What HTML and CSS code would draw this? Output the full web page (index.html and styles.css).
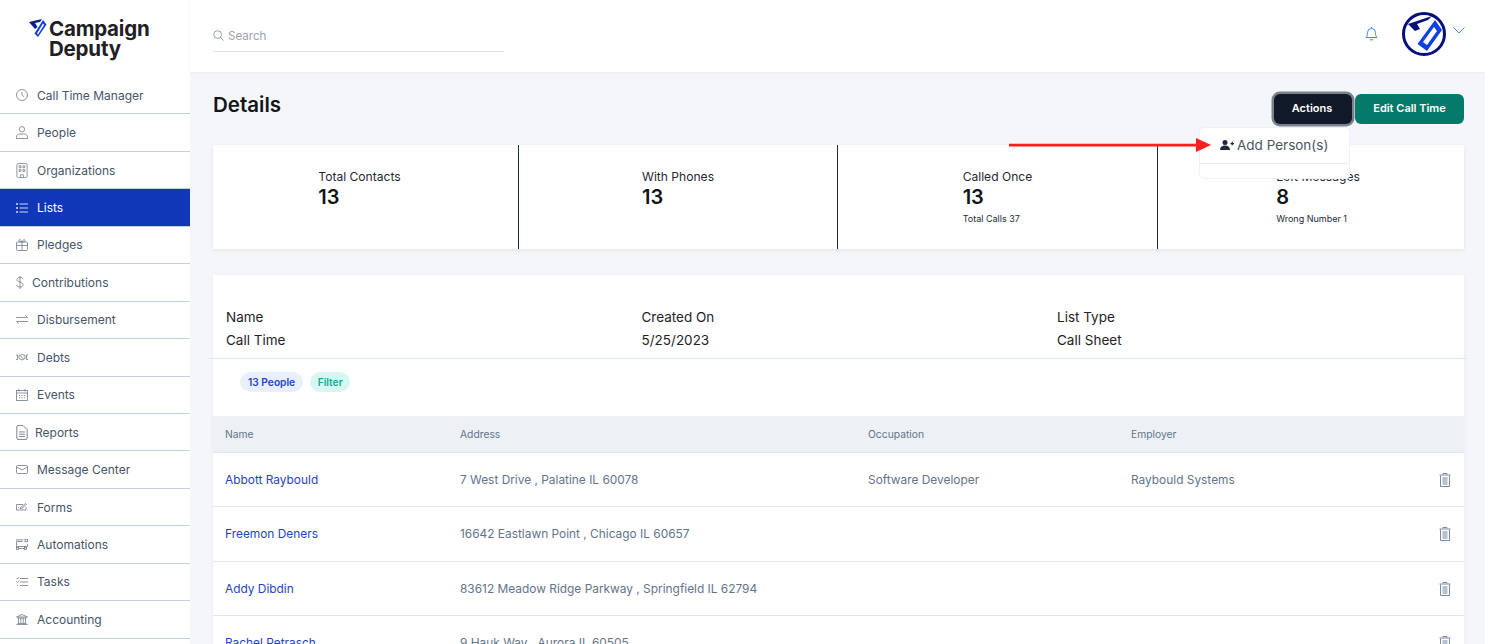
FILE: index.html
```html
<!DOCTYPE html>
<html lang="en">
<head>
  <meta charset="UTF-8">
  <meta name="viewport" content="width=device-width, initial-scale=1.0">
  <title>Details</title>
  <link rel="stylesheet" href="styles.css">
</head>
<body>
  <div class="app">
    <aside class="sidebar">
      <div class="logo">
        <svg class="logo-mark" viewBox="0 0 20 20" width="20" height="20">
          <path d="M0 3 L13 0 L11 3 L6 4 L8.500 8 L6 10 Z" fill="#0b1f8f"/>
          <path d="M14 1 L17.500 5.500 L9 18 L5.500 14.500 Z M14 4.500 L8 14.500 L9 15.500 L15 6 Z" fill="#1240e0" fill-rule="evenodd"/>
        </svg>
        <div class="logo-text">Campaign<br>Deputy</div>
      </div>
      <nav class="nav">
        <a class="nav-item">
          <svg class="nav-icon" viewBox="0 0 12 12"><circle cx="6" cy="6" r="5.500"/><path d="M6 2.800V6l2 1.800"/></svg>
          <span>Call Time Manager</span>
        </a>
        <a class="nav-item">
          <svg class="nav-icon" viewBox="0 0 12 13"><circle cx="6" cy="3.300" r="2.700"/><path d="M.5 12.500v-1.700c0-1.600 1.300-2.800 3-2.800h5c1.700 0 3 1.200 3 2.800v1.700z"/></svg>
          <span>People</span>
        </a>
        <a class="nav-item">
          <svg class="nav-icon" viewBox="0 0 12 16"><rect x=".5" y=".5" width="11" height="15" rx="1.500"/><path d="M3 3h2v2H3zM7 3h2v2H7zM3 7h2v2H3zM7 7h2v2H7zM4.500 15.500v-3h3v3"/></svg>
          <span>Organizations</span>
        </a>
        <a class="nav-item nav-active">
          <svg class="nav-icon" viewBox="0 0 12 10"><path d="M3.500 1H12M3.500 5H12M3.500 9H12"/><path d="M.5.5h1v1h-1zM.5 4.500h1v1h-1zM.5 8.500h1v1h-1z"/></svg>
          <span>Lists</span>
        </a>
        <a class="nav-item">
          <svg class="nav-icon" viewBox="0 0 12 12"><rect x=".5" y="3" width="11" height="8.500" rx="1"/><path d="M.5 6.500h11M6 3v8.500M6 3C4.500 3 2.800 2.600 2.800 1.500S5 .2 6 3c1-2.800 3.200-2.600 3.200-1.500S7.500 3 6 3z"/></svg>
          <span>Pledges</span>
        </a>
        <a class="nav-item">
          <svg class="nav-icon nav-icon-dollar" viewBox="0 0 8 13"><path d="M7 3.200C7 2 5.700 1.500 4 1.500S1 2.300 1 3.600s1.300 2 3 2.500 3 1 3 2.600-1.300 2.400-3 2.400-3-.6-3-1.900M4 0v13"/></svg>
          <span>Contributions</span>
        </a>
        <a class="nav-item">
          <svg class="nav-icon" viewBox="0 0 12 9"><path d="M0 2.500h11.500M9.300 .3l2.200 2.200M12 6.500H.5M2.700 8.700.5 6.500"/></svg>
          <span>Disbursement</span>
        </a>
        <a class="nav-item">
          <svg class="nav-icon" viewBox="0 0 12 7"><path d="M0 1h1.500v4.500H0M12 1h-1.500v4.500H12M3 1.500 6 .5l3 1v3l-3 1.500-3-1.500z"/><path d="M4.500 2l3 3"/></svg>
          <span>Debts</span>
        </a>
        <a class="nav-item">
          <svg class="nav-icon" viewBox="0 0 12 12"><rect x=".5" y="1.500" width="11" height="10"/><path d="M.5 4h11M3 0v2.500M9 0v2.500M3 6.500h1.200M5.400 6.500h1.200M7.800 6.500H9M3 8.800h1.200M5.400 8.800h1.200M7.800 8.800H9"/></svg>
          <span>Events</span>
        </a>
        <a class="nav-item nav-reports">
          <svg class="nav-icon" viewBox="0 0 10 13"><path d="M.5 1.500a1 1 0 0 1 1-1h4.500l3.500 3.500v7.500a1 1 0 0 1-1 1h-7a1 1 0 0 1-1-1zM2.500 6h5M2.500 8h5M2.500 10h5"/></svg>
          <span>Reports</span>
        </a>
        <a class="nav-item">
          <svg class="nav-icon" viewBox="0 0 12 9"><rect x=".5" y=".5" width="11" height="8" rx="1"/><path d="M.5 2l5.500 3 5.500-3"/></svg>
          <span>Message Center</span>
        </a>
        <a class="nav-item">
          <svg class="nav-icon" viewBox="0 0 12 8"><path d="M7 1.500H.5v5.500h9.500V4M2 4.500h1M4 5l5.500-4.500 1 1L5 6z"/></svg>
          <span>Forms</span>
        </a>
        <a class="nav-item">
          <svg class="nav-icon" viewBox="0 0 12 11"><path d="M0 .9h7.500M6.500 2.500H.5v5h11V5M2.500 9.500h6"/><rect x="9" y=".2" width="2.500" height="2.500"/><rect x=".5" y="8.500" width="2" height="2"/><rect x="8.500" y="8.500" width="2" height="2"/></svg>
          <span>Automations</span>
        </a>
        <a class="nav-item">
          <svg class="nav-icon" viewBox="0 0 12 10"><path d="M4 1.500h8M4 5h8M4 8.500h8M.5 1l1 1 1.500-1.800M.5 4.500l1 1 1.500-1.800M1 8.500h1"/></svg>
          <span>Tasks</span>
        </a>
        <a class="nav-item">
          <svg class="nav-icon" viewBox="0 0 12 11"><path d="M.5 3 6 .5 11.500 3zM1.500 4h9M2.500 4v5M4.800 4v5M7.200 4v5M9.500 4v5M1.500 9.500h9M.5 10.500h11"/></svg>
          <span>Accounting</span>
        </a>
      </nav>
    </aside>

    <div class="content">
      <header class="topbar">
        <div class="search">
          <svg class="search-icon" viewBox="0 0 12 12"><circle cx="5" cy="5" r="4.200"/><path d="M8 8l3.500 3.500"/></svg>
          <span>Search</span>
        </div>
        <div class="topbar-right">
          <svg class="bell" viewBox="0 0 13 15"><path d="M1 11.500c1-1 1.500-2.500 1.500-5a4 4 0 0 1 8 0c0 2.500.5 4 1.500 5zM4.800 13.800h3.400M6.500 1v1.500"/></svg>
          <div class="avatar">
            <svg viewBox="0 0 44 44" width="44" height="44">
              <circle cx="22" cy="22" r="20.500" fill="#fff" stroke="#06107c" stroke-width="3"/>
              <path d="M6 12 L30 4 L26 8 L15 12 L18 17 L13 19 Z" fill="#06107c"/>
              <path d="M33 8 L40 18 L25 39 L15.500 32 Z M32 15 L21 30 L25 33 L35 19 Z" fill="#1240e0" fill-rule="evenodd"/>
            </svg>
          </div>
          <svg class="chevron" viewBox="0 0 12 7"><path d="M.5.5 6 6 11.500.5"/></svg>
        </div>
      </header>

      <main class="main">
        <div class="page-head">
          <h1>Details</h1>
          <div class="buttons">
            <button class="btn btn-dark">Actions</button>
            <button class="btn btn-green">Edit Call Time</button>
          </div>
        </div>

        <section class="stats">
          <div class="stat stat-first">
            <div>
              <div class="stat-label">Total Contacts</div>
              <div class="stat-value">13</div>
            </div>
          </div>
          <div class="stat">
            <div>
              <div class="stat-label">With Phones</div>
              <div class="stat-value">13</div>
            </div>
          </div>
          <div class="stat stat-third">
            <div>
              <div class="stat-label">Called Once</div>
              <div class="stat-value">13</div>
              <div class="stat-note">Total Calls 37</div>
            </div>
          </div>
          <div class="stat stat-last">
            <div>
              <div class="stat-label">Left Messages</div>
              <div class="stat-value">8</div>
              <div class="stat-note">Wrong Number 1</div>
            </div>
          </div>
        </section>

        <section class="card">
          <div class="info">
            <div>Name</div><div>Created On</div><div>List Type</div>
            <div>Call Time</div><div>5/25/2023</div><div>Call Sheet</div>
          </div>
          <div class="chips">
            <span class="chip chip-blue">13 People</span>
            <span class="chip chip-teal">Filter</span>
          </div>
          <table class="people">
            <thead>
              <tr><th class="col-name">Name</th><th class="col-address">Address</th><th class="col-job">Occupation</th><th>Employer</th><th class="col-del"></th></tr>
            </thead>
            <tbody>
              <tr>
                <td><a>Abbott Raybould</a></td><td>7 West Drive , Palatine IL 60078</td><td>Software Developer</td><td>Raybould Systems</td>
                <td class="col-del"><svg class="trash" viewBox="0 0 12 14"><path d="M4 1.500V.5h4v1M.5 2h11M1.500 2.500v11h9v-11"/><path class="trash-fill" d="M3.500 4h5v8h-5z"/></svg></td>
              </tr>
              <tr>
                <td><a>Freemon Deners</a></td><td>16642 Eastlawn Point , Chicago IL 60657</td><td></td><td></td>
                <td class="col-del"><svg class="trash" viewBox="0 0 12 14"><path d="M4 1.500V.5h4v1M.5 2h11M1.500 2.500v11h9v-11"/><path class="trash-fill" d="M3.500 4h5v8h-5z"/></svg></td>
              </tr>
              <tr>
                <td><a>Addy Dibdin</a></td><td>83612 Meadow Ridge Parkway , Springfield IL 62794</td><td></td><td></td>
                <td class="col-del"><svg class="trash" viewBox="0 0 12 14"><path d="M4 1.500V.5h4v1M.5 2h11M1.500 2.500v11h9v-11"/><path class="trash-fill" d="M3.500 4h5v8h-5z"/></svg></td>
              </tr>
              <tr>
                <td><a>Rachel Petrasch</a></td><td>9 Hauk Way , Aurora IL 60505</td><td></td><td></td>
                <td class="col-del"><svg class="trash" viewBox="0 0 12 14"><path d="M4 1.500V.5h4v1M.5 2h11M1.500 2.500v11h9v-11"/><path class="trash-fill" d="M3.500 4h5v8h-5z"/></svg></td>
              </tr>
            </tbody>
          </table>
        </section>
      </main>
    </div>
  </div>

  <!-- dropdown and the annotation arrow sit over the stats card -->
  <div class="menu">
    <div class="menu-item">
      <svg class="menu-icon" viewBox="0 0 14 10"><circle cx="5" cy="2.500" r="2.500"/><path d="M0 10c0-3 2-4.500 5-4.500s5 1.500 5 4.500z"/><path d="M10.500 3H14v1.200h-3.500zM11.650 1.800h1.200v3.500h-1.200z"/></svg>
      <span>Add Person(s)</span>
    </div>
  </div>
  <svg class="arrow" viewBox="0 0 202 14" width="202" height="14">
    <path d="M0 5.800h187v2.600H0z" fill="#fb1f1f"/>
    <path d="M187 0l15 7-15 7z" fill="#fb1f1f"/>
  </svg>
</body>
</html>
```

FILE: styles.css
```css
* {
  box-sizing: border-box;
}

html, body {
  height: 100%;
}

body {
  margin: 0;
  overflow: hidden;
  font-family: Inter, "Liberation Sans", sans-serif;
  color: #111827;
  background-color: #f4f6f9;
}

.app {
  display: flex;
  height: 644px;
}

/* sidebar */
.sidebar {
  width: 190px;
  flex-shrink: 0;
  background-color: #fff;
}

.logo {
  display: flex;
  align-items: flex-start;
  height: 77px;
  padding: 19px 0 0 29px;
}

.logo-mark {
  flex-shrink: 0;
}

.logo-text {
  font-size: 20.500px;
  font-weight: 700;
  line-height: 20px;
  letter-spacing: -0.2px;
  color: #1f2024;
}

.nav-item {
  display: flex;
  align-items: center;
  height: 37.450px;
  padding-left: 16px;
  border-bottom: 1px solid #c3d0df;
  font-size: 12px;
  color: #475569;
}

.nav-icon {
  width: 12px;
  max-height: 15px;
  margin-right: 9px;
  flex-shrink: 0;
  fill: none;
  stroke: #717a88;
  stroke-width: 0.8;
}

.nav-icon-dollar {
  width: 8px;
  margin-right: 8px;
}

.nav-reports .nav-icon {
  margin-right: 7px;
}

.nav-active {
  background-color: #0f37b8;
  color: #fff;
}

.nav-active .nav-icon {
  stroke: #fff;
}

/* top bar */
.content {
  flex: 1;
  min-width: 0;
}

.topbar {
  display: flex;
  align-items: flex-start;
  justify-content: space-between;
  height: 72px;
  padding: 0 21px 0 23px;
  background-color: #fff;
  box-shadow: 0 1px 3px rgba(15, 23, 42, 0.05);
}

.search {
  display: flex;
  align-items: center;
  width: 291px;
  height: 24px;
  margin-top: 28px;
  padding-bottom: 8px;
  font-size: 11.600px;
  color: #9ca3af;
  border-bottom: 1px solid #dde3ea;
  border-image: linear-gradient(to right, transparent 1px, #dde3ea 1px) 1;
}

.search-icon {
  width: 11px;
  margin-right: 4px;
  fill: none;
  stroke: #8b95a5;
}

.topbar-right {
  display: flex;
  align-items: flex-start;
  margin-right: -1px;
}

.bell {
  width: 13px;
  margin-top: 26px;
  margin-right: 24px;
  fill: none;
  stroke: #3b8bf5;
}

.avatar {
  width: 44px;
  height: 44px;
  margin-top: 12px;
}

.chevron {
  width: 12px;
  margin-top: 27px;
  margin-left: 7px;
  fill: none;
  stroke: #3b8bf5;
}

/* main */
.main {
  padding: 0 21px 0 23px;
}

.page-head {
  display: flex;
  justify-content: space-between;
  align-items: flex-start;
  height: 73px;
  padding-top: 22px;
}

.page-head h1 {
  margin: 0;
  font-size: 20.500px;
  font-weight: 600;
  line-height: 22px;
  color: #111418;
}

.buttons {
  display: flex;
  gap: 3px;
}

.btn {
  height: 30px;
  padding: 0 0 2px;
  border: none;
  border-radius: 6px;
  font-family: inherit;
  font-size: 11px;
  font-weight: 600;
  color: #fff;
}

.btn-dark {
  width: 78px;
  padding-right: 2px;
  background-color: #111827;
  box-shadow: 0 0 0 2.500px #7a808c;
}

.btn-green {
  width: 109px;
  background-color: #047a6a;
}

.stats {
  display: flex;
  height: 104px;
  background-color: #fff;
  box-shadow: 0 1px 4px rgba(15, 23, 42, 0.08);
}

.stat {
  flex: 0 0 319px;
  display: flex;
  justify-content: center;
  padding-top: 25px;
  border-right: 1px solid #1f2937;
}

.stat-first {
  flex-basis: 306px;
  padding-right: 12px;
}

.stat-third {
  flex-basis: 320px;
}

.stat-last {
  flex: 1;
  padding-left: 14px;
  border-right: none;
}

.stat-label {
  font-size: 12.100px;
  line-height: 14px;
  color: #1f2937;
}

.stat-value {
  margin-top: 1px;
  font-size: 20px;
  font-weight: 600;
  line-height: 24px;
  color: #111418;
}

.stat-note {
  margin-top: 4px;
  font-size: 9px;
  line-height: 12px;
  color: #1f2937;
}

/* details card */
.card {
  margin-top: 26px;
  background-color: #fff;
  box-shadow: 0 1px 4px rgba(15, 23, 42, 0.05);
}

.info {
  display: grid;
  grid-template-columns: repeat(3, 415.500px);
  align-content: start;
  row-gap: 5px;
  height: 84px;
  margin: 0 -3px 0 -5px;
  padding: 33px 0 0 18px;
  border-bottom: 1px solid #dfe7ef;
  font-size: 13.500px;
  line-height: 18px;
  color: #1f2226;
}

.chips {
  display: flex;
  gap: 7px;
  height: 57px;
  padding: 13px 0 0 27px;
}

.chip {
  height: 20px;
  padding: 0 8px;
  border-radius: 10px;
  font-size: 10.200px;
  font-weight: 600;
  line-height: 20px;
}

.chip-blue {
  background-color: #e9effb;
  color: #1f45c4;
}

.chip-teal {
  padding: 0 7.500px;
  background-color: #d8f7f3;
  color: #1ba793;
}

.people {
  width: 100%;
  border-collapse: collapse;
  table-layout: fixed;
  font-size: 11.900px;
}

.people th {
  height: 36px;
  padding: 0 0 0 12px;
  background-color: #edf1f5;
  border-bottom: 1px solid #dfe7ef;
  font-size: 10.300px;
  font-weight: 400;
  text-align: left;
  color: #64748b;
}

.people td {
  height: 54.500px;
  padding: 0 0 0 12px;
  border-bottom: 1px solid #e2e7ee;
  color: #64748b;
}

.people a {
  color: #1f45c4;
}

.col-name {
  width: 235px;
}

.col-address {
  width: 408px;
}

.col-job {
  width: 263px;
}

.col-del {
  width: 60px;
}

.trash {
  display: block;
  width: 12px;
  margin: 1px 0 0 23px;
  fill: none;
  stroke: #7b8aa0;
}

.trash-fill {
  fill: #b7c0ce;
  stroke: none;
}

/* overlays */
.menu {
  position: absolute;
  left: 1199px;
  top: 127px;
  width: 151px;
  height: 52px;
  background-color: #fff;
  border: 1px solid #eef1f6;
  border-radius: 4px;
}

.menu-item {
  display: flex;
  align-items: center;
  height: 36px;
  padding: 0 0 1px 20px;
  border-bottom: 1px solid #e8ecf2;
  font-size: 13.500px;
  color: #4b5563;
}

.menu-icon {
  width: 14px;
  margin-right: 3px;
  fill: #1f2937;
}

.arrow {
  position: absolute;
  left: 1009px;
  top: 138px;
}
```
